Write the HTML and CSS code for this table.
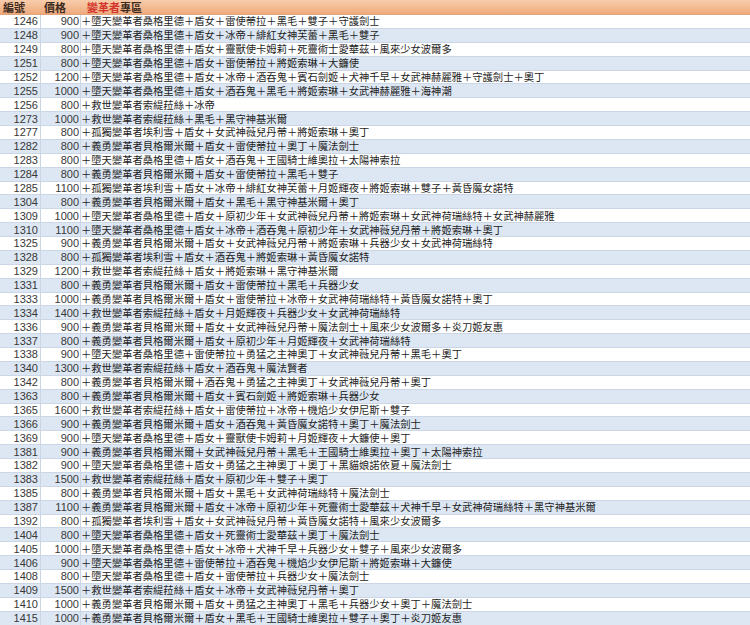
FILE: index.html
```html
<!DOCTYPE html>
<html lang="zh-Hant">
<head>
<meta charset="utf-8">
<title>變革者專區</title>
<link rel="stylesheet" href="styles.css">
</head>
<body>
<div class="sheet">
  <div class="head">
    <div class="h1">編號</div>
    <div class="h2">價格</div>
    <div class="h3"><span class="red">變革者</span>專區</div>
  </div>
  <div class="rows">
    <div class="row"><div class="num">1246</div><div class="price">900</div><div class="items">＋墮天變革者桑格里德＋盾女＋雷使蒂拉＋黑毛＋雙子＋守護劍士</div></div>
    <div class="row"><div class="num">1248</div><div class="price">900</div><div class="items">＋墮天變革者桑格里德＋盾女＋冰帝＋緋紅女神芙蕾＋黑毛＋雙子</div></div>
    <div class="row"><div class="num">1249</div><div class="price">800</div><div class="items">＋墮天變革者桑格里德＋盾女＋靈獸使卡姆莉＋死靈術士愛華茲＋風來少女波爾多</div></div>
    <div class="row"><div class="num">1251</div><div class="price">800</div><div class="items">＋墮天變革者桑格里德＋盾女＋雷使蒂拉＋將姬索琳＋大鐮使</div></div>
    <div class="row"><div class="num">1252</div><div class="price">1200</div><div class="items">＋墮天變革者桑格里德＋盾女＋冰帝＋酒吞鬼＋賓石劍姬＋犬神千早＋女武神赫麗雅＋守護劍士＋奧丁</div></div>
    <div class="row"><div class="num">1255</div><div class="price">1000</div><div class="items">＋墮天變革者桑格里德＋盾女＋酒吞鬼＋黑毛＋將姬索琳＋女武神赫麗雅＋海神潮</div></div>
    <div class="row"><div class="num">1256</div><div class="price">800</div><div class="items">＋救世變革者索緹菈絲＋冰帝</div></div>
    <div class="row"><div class="num">1273</div><div class="price">1000</div><div class="items">＋救世變革者索緹菈絲＋黑毛＋黑守神基米爾</div></div>
    <div class="row"><div class="num">1277</div><div class="price">800</div><div class="items">＋孤獨變革者埃利雪＋盾女＋女武神薇兒丹蒂＋將姬索琳＋奧丁</div></div>
    <div class="row"><div class="num">1282</div><div class="price">800</div><div class="items">＋義勇變革者貝格爾米爾＋盾女＋雷使蒂拉＋奧丁＋魔法劍士</div></div>
    <div class="row"><div class="num">1283</div><div class="price">800</div><div class="items">＋墮天變革者桑格里德＋盾女＋酒吞鬼＋王國騎士維奧拉＋太陽神索拉</div></div>
    <div class="row"><div class="num">1284</div><div class="price">800</div><div class="items">＋義勇變革者貝格爾米爾＋盾女＋雷使蒂拉＋黑毛＋雙子</div></div>
    <div class="row"><div class="num">1285</div><div class="price">1100</div><div class="items">＋孤獨變革者埃利雪＋盾女＋冰帝＋緋紅女神芙蕾＋月姬輝夜＋將姬索琳＋雙子＋黃昏魔女諾特</div></div>
    <div class="row"><div class="num">1304</div><div class="price">800</div><div class="items">＋義勇變革者貝格爾米爾＋盾女＋黑毛＋黑守神基米爾＋奧丁</div></div>
    <div class="row"><div class="num">1309</div><div class="price">1000</div><div class="items">＋墮天變革者桑格里德＋盾女＋原初少年＋女武神薇兒丹蒂＋將姬索琳＋女武神荷瑞絲特＋女武神赫麗雅</div></div>
    <div class="row"><div class="num">1310</div><div class="price">1100</div><div class="items">＋墮天變革者桑格里德＋盾女＋冰帝＋酒吞鬼＋原初少年＋女武神薇兒丹蒂＋將姬索琳＋奧丁</div></div>
    <div class="row"><div class="num">1325</div><div class="price">900</div><div class="items">＋義勇變革者貝格爾米爾＋盾女＋女武神薇兒丹蒂＋將姬索琳＋兵器少女＋女武神荷瑞絲特</div></div>
    <div class="row"><div class="num">1328</div><div class="price">800</div><div class="items">＋孤獨變革者埃利雪＋盾女＋酒吞鬼＋將姬索琳＋黃昏魔女諾特</div></div>
    <div class="row"><div class="num">1329</div><div class="price">1200</div><div class="items">＋救世變革者索緹菈絲＋盾女＋將姬索琳＋黑守神基米爾</div></div>
    <div class="row"><div class="num">1331</div><div class="price">800</div><div class="items">＋義勇變革者貝格爾米爾＋盾女＋雷使蒂拉＋黑毛＋兵器少女</div></div>
    <div class="row"><div class="num">1333</div><div class="price">1000</div><div class="items">＋義勇變革者貝格爾米爾＋盾女＋雷使蒂拉＋冰帝＋女武神荷瑞絲特＋黃昏魔女諾特＋奧丁</div></div>
    <div class="row"><div class="num">1334</div><div class="price">1400</div><div class="items">＋救世變革者索緹菈絲＋盾女＋月姬輝夜＋兵器少女＋女武神荷瑞絲特</div></div>
    <div class="row"><div class="num">1336</div><div class="price">900</div><div class="items">＋義勇變革者貝格爾米爾＋盾女＋女武神薇兒丹蒂＋魔法劍士＋風來少女波爾多＋炎刀姬友惠</div></div>
    <div class="row"><div class="num">1337</div><div class="price">800</div><div class="items">＋義勇變革者貝格爾米爾＋盾女＋原初少年＋月姬輝夜＋女武神荷瑞絲特</div></div>
    <div class="row"><div class="num">1338</div><div class="price">900</div><div class="items">＋墮天變革者桑格里德＋雷使蒂拉＋勇猛之主神奧丁＋女武神薇兒丹蒂＋黑毛＋奧丁</div></div>
    <div class="row"><div class="num">1340</div><div class="price">1300</div><div class="items">＋救世變革者索緹菈絲＋盾女＋酒吞鬼＋魔法賢者</div></div>
    <div class="row"><div class="num">1342</div><div class="price">800</div><div class="items">＋義勇變革者貝格爾米爾＋酒吞鬼＋勇猛之主神奧丁＋女武神薇兒丹蒂＋奧丁</div></div>
    <div class="row"><div class="num">1363</div><div class="price">800</div><div class="items">＋義勇變革者貝格爾米爾＋盾女＋賓石劍姬＋將姬索琳＋兵器少女</div></div>
    <div class="row"><div class="num">1365</div><div class="price">1600</div><div class="items">＋救世變革者索緹菈絲＋盾女＋雷使蒂拉＋冰帝＋機焰少女伊尼斯＋雙子</div></div>
    <div class="row"><div class="num">1366</div><div class="price">900</div><div class="items">＋義勇變革者貝格爾米爾＋盾女＋酒吞鬼＋黃昏魔女諾特＋奧丁＋魔法劍士</div></div>
    <div class="row"><div class="num">1369</div><div class="price">900</div><div class="items">＋墮天變革者桑格里德＋盾女＋靈獸使卡姆莉＋月姬輝夜＋大鐮使＋奧丁</div></div>
    <div class="row"><div class="num">1381</div><div class="price">900</div><div class="items">＋義勇變革者貝格爾米爾＋女武神薇兒丹蒂＋黑毛＋王國騎士維奧拉＋奧丁＋太陽神索拉</div></div>
    <div class="row"><div class="num">1382</div><div class="price">900</div><div class="items">＋墮天變革者桑格里德＋盾女＋勇猛之主神奧丁＋奧丁＋黑貓娘諾依夏＋魔法劍士</div></div>
    <div class="row"><div class="num">1383</div><div class="price">1500</div><div class="items">＋救世變革者索緹菈絲＋盾女＋原初少年＋雙子＋奧丁</div></div>
    <div class="row"><div class="num">1385</div><div class="price">800</div><div class="items">＋義勇變革者貝格爾米爾＋盾女＋黑毛＋女武神荷瑞絲特＋魔法劍士</div></div>
    <div class="row"><div class="num">1387</div><div class="price">1100</div><div class="items">＋義勇變革者貝格爾米爾＋盾女＋冰帝＋原初少年＋死靈術士愛華茲＋犬神千早＋女武神荷瑞絲特＋黑守神基米爾</div></div>
    <div class="row"><div class="num">1392</div><div class="price">800</div><div class="items">＋孤獨變革者埃利雪＋盾女＋女武神薇兒丹蒂＋黃昏魔女諾特＋風來少女波爾多</div></div>
    <div class="row"><div class="num">1404</div><div class="price">800</div><div class="items">＋墮天變革者桑格里德＋盾女＋死靈術士愛華茲＋奧丁＋魔法劍士</div></div>
    <div class="row"><div class="num">1405</div><div class="price">1000</div><div class="items">＋墮天變革者桑格里德＋盾女＋冰帝＋犬神千早＋兵器少女＋雙子＋風來少女波爾多</div></div>
    <div class="row"><div class="num">1406</div><div class="price">900</div><div class="items">＋墮天變革者桑格里德＋雷使蒂拉＋酒吞鬼＋機焰少女伊尼斯＋將姬索琳＋大鐮使</div></div>
    <div class="row"><div class="num">1408</div><div class="price">800</div><div class="items">＋墮天變革者桑格里德＋盾女＋雷使蒂拉＋兵器少女＋魔法劍士</div></div>
    <div class="row"><div class="num">1409</div><div class="price">1500</div><div class="items">＋救世變革者索緹菈絲＋盾女＋冰帝＋女武神薇兒丹蒂＋奧丁</div></div>
    <div class="row"><div class="num">1410</div><div class="price">1000</div><div class="items">＋義勇變革者貝格爾米爾＋盾女＋勇猛之主神奧丁＋黑毛＋兵器少女＋奧丁＋魔法劍士</div></div>
    <div class="row"><div class="num">1415</div><div class="price">1000</div><div class="items">＋義勇變革者貝格爾米爾＋盾女＋黑毛＋王國騎士維奧拉＋雙子＋奧丁＋炎刀姬友惠</div></div>
  </div>
</div>
</body>
</html>
```

FILE: styles.css
```css
html, body {
  margin: 0;
  padding: 0;
  background: #ffffff;
}

body {
  font-family: "Liberation Sans", "Noto Sans CJK TC", sans-serif;
  color: #2a2a2a;
}

.sheet {
  width: 750px;
  overflow: hidden;
}

.head {
  display: flex;
  align-items: center;
  height: 15px;
  box-sizing: border-box;
  background: linear-gradient(#f8cdab, #eeaa7d);
  border-bottom: 1px solid #e0a57c;
  font-family: "Noto Sans CJK TC", sans-serif;
  font-size: 11px;
  font-weight: bold;
  line-height: 13px;
  color: #3b2a20;
}

.h1 {
  width: 41px;
  box-sizing: border-box;
  padding-left: 3px;
}

.h2 {
  width: 40px;
  box-sizing: border-box;
  padding-left: 3px;
}

.h3 {
  padding-left: 6px;
}

.red {
  color: #d2342b;
}

.rows {
  display: flex;
  flex-direction: column;
}

.row {
  display: flex;
  align-items: stretch;
  height: 13.88px;
  box-sizing: border-box;
  border-bottom: 1px solid #cbd7e6;
  background: #ffffff;
}

.row:nth-child(even) {
  background: #dde7f3;
}

.num,
.price {
  display: flex;
  align-items: center;
  justify-content: flex-end;
  box-sizing: border-box;
  border-right: 1px solid #ccd6e2;
  font-size: 11px;
  line-height: 12px;
  color: #383838;
}

.num {
  width: 41px;
  padding-right: 2px;
}

.price {
  width: 40px;
  padding-right: 1px;
}

.items {
  display: flex;
  align-items: center;
  padding-left: 0;
  font-family: "Noto Sans CJK TC", sans-serif;
  font-size: 10.3px;
  line-height: 12px;
  white-space: nowrap;
  color: #1e1e1e;
}
```
